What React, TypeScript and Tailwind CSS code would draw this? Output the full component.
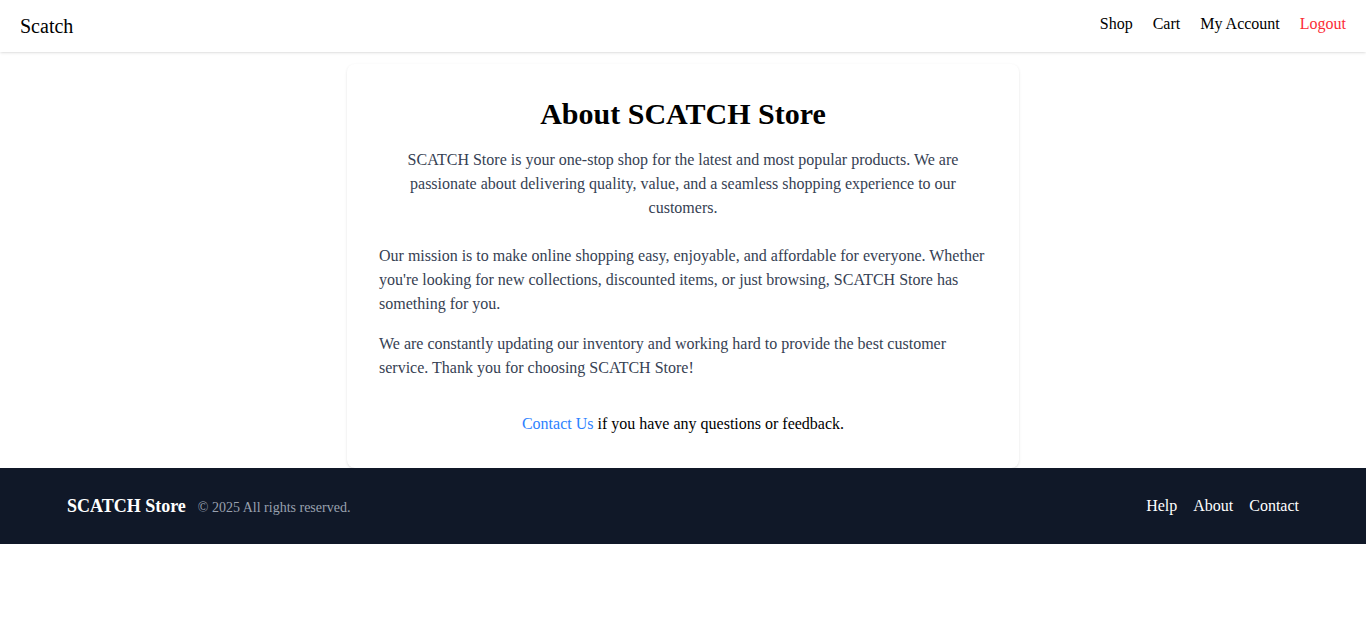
import React from 'react';

const navLinks = [
  { label: 'Shop', danger: false },
  { label: 'Cart', danger: false },
  { label: 'My Account', danger: false },
  { label: 'Logout', danger: true },
];

const footerLinks = ['Help', 'About', 'Contact'];

const App: React.FC = () => {
  return (
    <div className="min-h-[617px] bg-white text-black font-['Liberation_Serif',serif]">
      <header className="flex justify-between px-5 py-3 bg-white shadow">
        <a href="#" className="text-xl">Scatch</a>
        <nav className="flex gap-5 text-base">
          {navLinks.map((link) => (
            <a key={link.label} href="#" className={link.danger ? 'text-red-500' : 'text-black'}>
              {link.label}
            </a>
          ))}
        </nav>
      </header>

      <main className="pt-3">
        <div className="max-w-2xl mx-auto bg-white rounded-lg shadow-sm p-8">
          <h1 className="text-3xl font-bold text-center mb-4">About SCATCH Store</h1>
          <p className="text-center text-gray-700 leading-6 max-w-xl mx-auto mb-6">
            SCATCH Store is your one-stop shop for the latest and most popular products. We are
            passionate about delivering quality, value, and a seamless shopping experience to our
            customers.
          </p>
          <p className="text-gray-700 leading-6 mb-4">
            Our mission is to make online shopping easy, enjoyable, and affordable for everyone.
            Whether you're looking for new collections, discounted items, or just browsing, SCATCH
            Store has something for you.
          </p>
          <p className="text-gray-700 leading-6">
            We are constantly updating our inventory and working hard to provide the best customer
            service. Thank you for choosing SCATCH Store!
          </p>
          <p className="text-center mt-8">
            <a href="#" className="text-blue-500">Contact Us</a> if you have any questions or feedback.
          </p>
        </div>
      </main>

      <footer className="bg-gray-900 text-white py-6">
        <div className="max-w-7xl mx-auto px-6 flex items-center justify-between">
          <div className="flex items-baseline gap-3">
            <span className="text-lg font-bold">SCATCH Store</span>
            <span className="text-sm text-gray-400">© 2025 All rights reserved.</span>
          </div>
          <div className="flex gap-4">
            {footerLinks.map((l) => (
              <a key={l} href="#" className="text-white">{l}</a>
            ))}
          </div>
        </div>
      </footer>
    </div>
  );
};

export default App;
